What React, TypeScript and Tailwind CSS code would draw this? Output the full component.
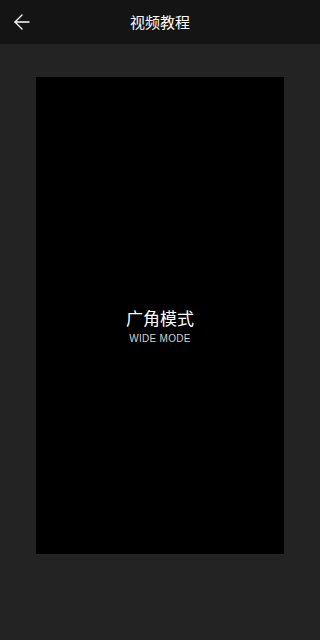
import { ArrowLeft } from "lucide-react";

export default function App() {
  return (
    <div
      className="flex h-[640px] w-[320px] flex-col bg-[#232323]"
      style={{ fontFamily: '"Noto Sans", "Noto Sans CJK SC", sans-serif' }}
    >
      <header className="relative flex h-[44px] shrink-0 items-center justify-center bg-[#141414]">
        <button type="button" aria-label="返回" className="absolute left-[10px] top-[10px] text-white">
          <ArrowLeft size={24} strokeWidth={1.4} />
        </button>
        <h1 className="text-[15px] leading-none text-white">视频教程</h1>
      </header>

      <div className="flex flex-1 justify-center px-[36px] pt-[33px] pb-[86px]">
        <div className="flex w-full flex-col items-center justify-center bg-black pt-[22px]">
          <p className="text-[17px] leading-[20px] text-white">广角模式</p>
          <p
            className="mt-[4px] text-[10px] leading-[12px] tracking-[0.3px] text-[#d0d0d0]"
            style={{ fontFamily: '"Liberation Sans", Arial, sans-serif' }}
          >
            WIDE MODE
          </p>
        </div>
      </div>
    </div>
  );
}
